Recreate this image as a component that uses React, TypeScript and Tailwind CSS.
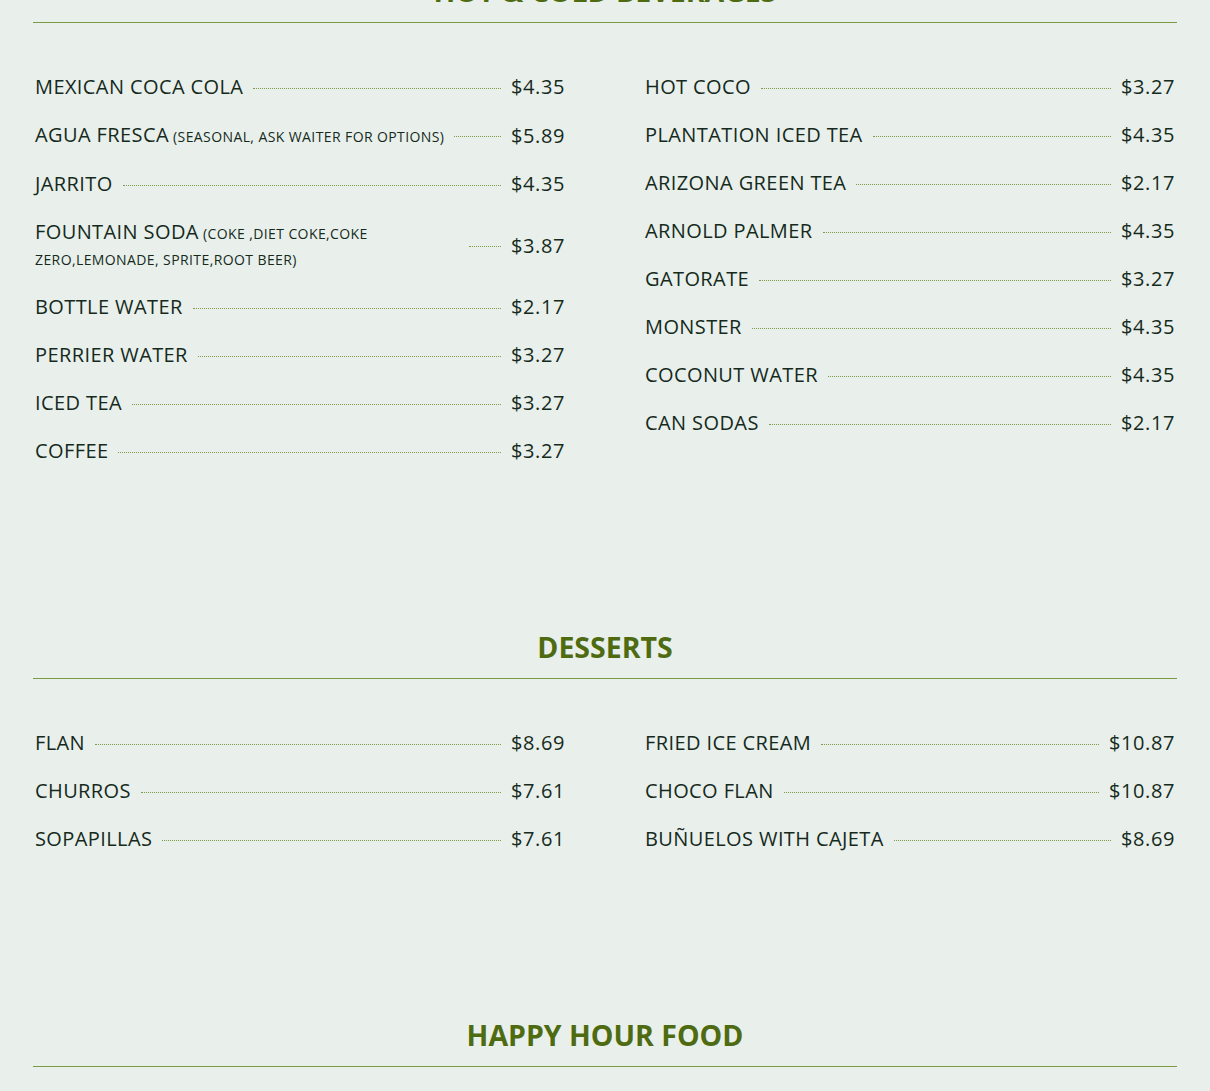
type Item = { name: string; note?: string; price: string };

const beveragesLeft: Item[] = [
  { name: 'MEXICAN COCA COLA', price: '$4.35' },
  { name: 'AGUA FRESCA', note: '(SEASONAL, ASK WAITER FOR OPTIONS)', price: '$5.89' },
  { name: 'JARRITO', price: '$4.35' },
  { name: 'FOUNTAIN SODA', note: '(COKE ,DIET COKE,COKE ZERO,LEMONADE, SPRITE,ROOT BEER)', price: '$3.87' },
  { name: 'BOTTLE WATER', price: '$2.17' },
  { name: 'PERRIER WATER', price: '$3.27' },
  { name: 'ICED TEA', price: '$3.27' },
  { name: 'COFFEE', price: '$3.27' },
]

const beveragesRight: Item[] = [
  { name: 'HOT COCO', price: '$3.27' },
  { name: 'PLANTATION ICED TEA', price: '$4.35' },
  { name: 'ARIZONA GREEN TEA', price: '$2.17' },
  { name: 'ARNOLD PALMER', price: '$4.35' },
  { name: 'GATORATE', price: '$3.27' },
  { name: 'MONSTER', price: '$4.35' },
  { name: 'COCONUT WATER', price: '$4.35' },
  { name: 'CAN SODAS', price: '$2.17' },
]

const dessertsLeft: Item[] = [
  { name: 'FLAN', price: '$8.69' },
  { name: 'CHURROS', price: '$7.61' },
  { name: 'SOPAPILLAS', price: '$7.61' },
]

const dessertsRight: Item[] = [
  { name: 'FRIED ICE CREAM', price: '$10.87' },
  { name: 'CHOCO FLAN', price: '$10.87' },
  { name: 'BUÑUELOS WITH CAJETA', price: '$8.69' },
]

function Row({ item }: { item: Item }) {
  return (
    <div className="flex items-center">
      <p className="max-w-[80%] text-[20px] leading-[25px] tracking-[0.4px] text-[#152a1c]">
        {item.name}
        {item.note && <span className="text-[14px] leading-[23px] tracking-[0.4px]">&nbsp;{item.note}</span>}
      </p>
      <div className="flex-1 mx-[10px] mt-[3px] border-b border-dotted border-[#7d9a44] min-w-[20px]" />
      <p className="text-[20px] leading-[25px] tracking-[0.6px] text-[#152a1c]">{item.price}</p>
    </div>
  )
}

function Column({ items }: { items: Item[] }) {
  return (
    <div className="flex flex-col gap-[23px]">
      {items.map((item, i) => (
        <Row item={item} key={i} />
      ))}
    </div>
  )
}

function Section({ title, left, right }: { title: string; left: Item[]; right: Item[] }) {
  return (
    <section className="mb-[164px]">
      <h2 className="text-center text-[28.5px] leading-[40px] font-bold text-[#4f6b12] pb-[11px] border-b border-[#7d9a44]">
        {title}
      </h2>
      <div className="grid grid-cols-2 gap-x-[80px] px-[2px] pt-[51px]">
        <Column items={left} />
        <Column items={right} />
      </div>
    </section>
  )
}

export default function App() {
  return (
    <div className="min-h-screen bg-[#e9f0eb] overflow-hidden" style={{ fontFamily: '"Open Sans", "Noto Sans", sans-serif' }}>
      <div className="mx-[33px] -mt-[29px]">
        <Section title="HOT & COLD BEVERAGES" left={beveragesLeft} right={beveragesRight} />
        <Section title="DESSERTS" left={dessertsLeft} right={dessertsRight} />
        <Section title="HAPPY HOUR FOOD" left={[]} right={[]} />
      </div>
    </div>
  )
}
